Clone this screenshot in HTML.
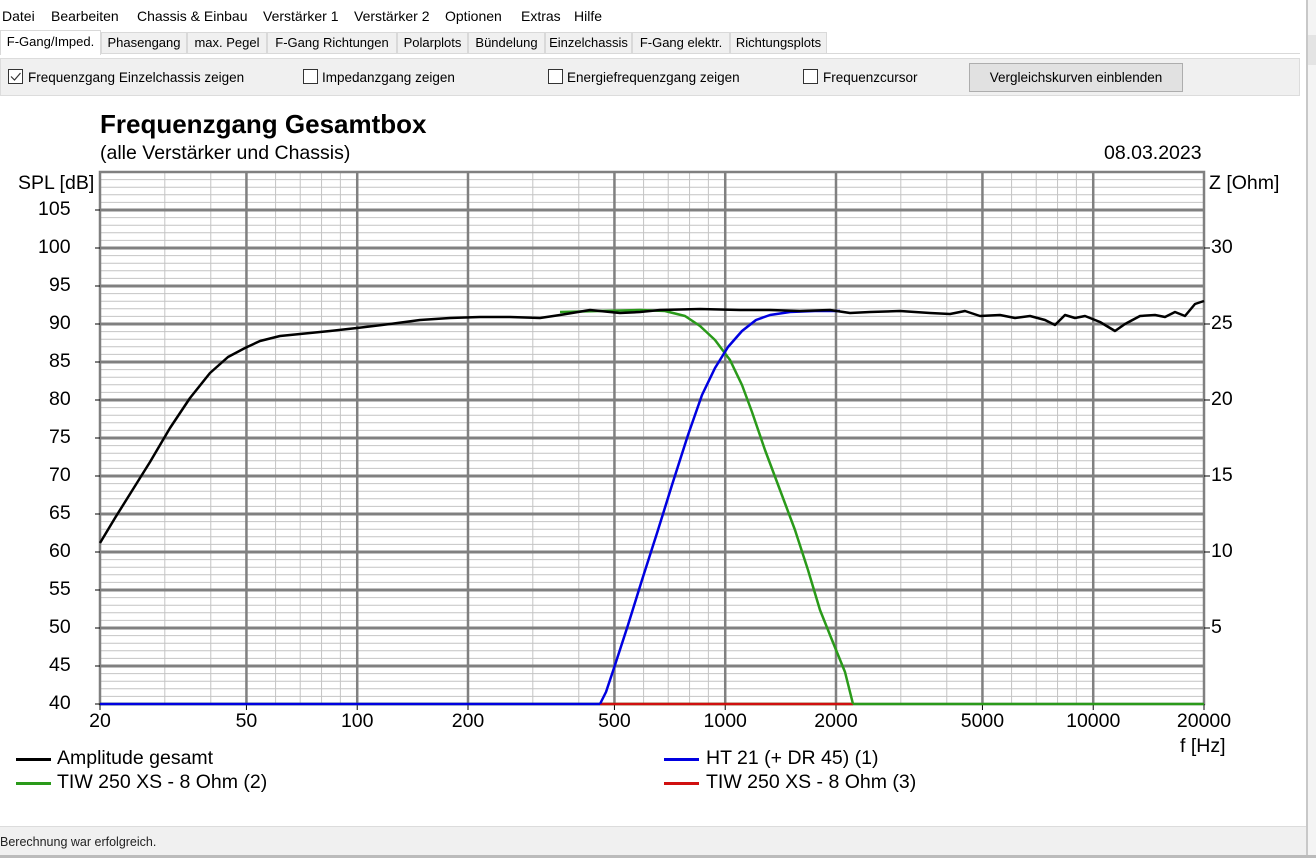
<!DOCTYPE html>
<html><head><meta charset="utf-8">
<style>
*{margin:0;padding:0;box-sizing:border-box}
body{width:1316px;height:858px;overflow:hidden;background:#fff;font-family:"Liberation Sans",sans-serif;position:relative;color:#000}
.a{position:absolute;white-space:nowrap}
.menu{font-size:14px;top:8px}
.tab{position:absolute;top:32px;height:22px;border:1px solid #d9d9d9;background:#f0f0f0;font-size:13px;line-height:20px;text-align:center}
.cb{position:absolute;top:69px;width:15px;height:15px;border:1px solid #333;background:#fff}
.lbl{font-size:13.5px;top:70px}
.ax{font-size:19.5px}
</style></head><body>
<div class="a menu" style="left:2px">Datei</div>
<div class="a menu" style="left:51px">Bearbeiten</div>
<div class="a menu" style="left:137px">Chassis &amp; Einbau</div>
<div class="a menu" style="left:263px">Verstärker 1</div>
<div class="a menu" style="left:354px">Verstärker 2</div>
<div class="a menu" style="left:445px">Optionen</div>
<div class="a menu" style="left:521px">Extras</div>
<div class="a menu" style="left:574px">Hilfe</div>

<div class="a" style="left:0;top:53px;width:1300px;height:1px;background:#d9d9d9"></div>
<div class="tab" style="left:101px;width:86px">Phasengang</div>
<div class="tab" style="left:187px;width:80px">max. Pegel</div>
<div class="tab" style="left:267px;width:130px">F-Gang Richtungen</div>
<div class="tab" style="left:397px;width:71px">Polarplots</div>
<div class="tab" style="left:468px;width:77px">Bündelung</div>
<div class="tab" style="left:545px;width:87px">Einzelchassis</div>
<div class="tab" style="left:632px;width:98px">F-Gang elektr.</div>
<div class="tab" style="left:730px;width:97px">Richtungsplots</div>
<div class="tab" style="left:0;top:30px;width:101px;height:25px;background:#fff;border-bottom:none;line-height:22px">F-Gang/Imped.</div>

<div class="a" style="left:0;top:58px;width:1300px;height:38px;background:#f0f0f0;border:1px solid #dcdcdc"></div>
<div class="cb" style="left:8px"></div>
<svg class="a" style="left:8px;top:69px" width="15" height="15"><path d="M3 7.5 L6.5 11 L12.5 4" fill="none" stroke="#333" stroke-width="1.2"/></svg>
<div class="a lbl" style="left:28px">Frequenzgang Einzelchassis zeigen</div>
<div class="cb" style="left:303px"></div><div class="a lbl" style="left:322px">Impedanzgang zeigen</div>
<div class="cb" style="left:548px"></div><div class="a lbl" style="left:567px">Energiefrequenzgang zeigen</div>
<div class="cb" style="left:803px"></div><div class="a lbl" style="left:823px">Frequenzcursor</div>
<div class="a" style="left:969px;top:63px;width:214px;height:29px;background:#e1e1e1;border:1px solid #adadad;font-size:13.5px;line-height:27px;text-align:center">Vergleichskurven einblenden</div>

<div class="a" style="left:100px;top:109px;font-size:26px;font-weight:bold">Frequenzgang Gesamtbox</div>
<div class="a ax" style="left:100px;top:142px">(alle Verstärker und Chassis)</div>
<div class="a ax" style="left:1104px;top:142px">08.03.2023</div>
<div class="a ax" style="left:18px;top:172px">SPL [dB]</div>
<div class="a ax" style="left:1209px;top:172px">Z [Ohm]</div>

<svg class="a" style="left:0;top:0" width="1316" height="858" id="s"></svg>
<div id="labels"></div>

<div class="a" style="left:16px;top:758px;width:35px;height:3px;background:#000"></div>
<div class="a ax" style="left:57px;top:747px">Amplitude gesamt</div>
<div class="a" style="left:16px;top:782px;width:35px;height:3px;background:#2a9a1a"></div>
<div class="a ax" style="left:57px;top:771px">TIW 250 XS - 8 Ohm (2)</div>
<div class="a" style="left:664px;top:758px;width:35px;height:3px;background:#0000e0"></div>
<div class="a ax" style="left:706px;top:747px">HT 21 (+ DR 45) (1)</div>
<div class="a" style="left:664px;top:782px;width:35px;height:3px;background:#d01010"></div>
<div class="a ax" style="left:706px;top:771px">TIW 250 XS - 8 Ohm (3)</div>
<div class="a ax" style="left:1180px;top:735px">f [Hz]</div>

<div class="a" style="left:0;top:826px;width:1308px;height:32px;background:#f0f0f0;border-top:1px solid #dcdcdc"></div>
<div class="a" style="left:0;top:835px;font-size:12.5px;color:#222">Berechnung war erfolgreich.</div>
<div class="a" style="left:1306px;top:0;width:2px;height:858px;background:#c8c8c8"></div>
<div class="a" style="left:1308px;top:0;width:8px;height:858px;background:#f4f4f4"></div>
<div class="a" style="left:1308px;top:35px;width:8px;height:30px;background:#e4e4e4"></div>
<div class="a" style="left:0;top:855px;width:1316px;height:3px;background:#bbb"></div>

<script>
var s=document.getElementById('s'),h='';
function X(f){return 100+368*Math.log10(f/20);}
function Y(d){return 704-7.6*(d-40);}
for(var d=41;d<110;d++){if(d%5)h+='<line x1="100" x2="1204" y1="'+Y(d)+'" y2="'+Y(d)+'" stroke="#c4c4c4" stroke-width="1"/>';}
var fs=[];[10,100,1000,10000].forEach(function(m){for(var k=1;k<10;k++)fs.push(k*m);});
fs.forEach(function(f){if(f<=20||f>=20000)return;var maj=[50,100,200,500,1000,2000,5000,10000].indexOf(f)>=0;
h+='<line y1="172" y2="704" x1="'+X(f)+'" x2="'+X(f)+'" stroke="'+(maj?'#808080':'#c4c4c4')+'" stroke-width="'+(maj?2.5:1)+'"/>';});
for(var d=45;d<110;d+=5){h+='<line x1="100" x2="1204" y1="'+Y(d)+'" y2="'+Y(d)+'" stroke="#808080" stroke-width="3"/>';}
h+='<rect x="100" y="172" width="1104" height="532" fill="none" stroke="#808080" stroke-width="2.5"/>';
var L='';
for(var d=40;d<=105;d+=5){h+='<line x1="95" x2="100" y1="'+Y(d)+'" y2="'+Y(d)+'" stroke="#000"/>';
L+='<div class="a ax" style="left:'+(d<100?49:38)+'px;top:'+(Y(d)-12)+'px">'+d+'</div>';}
for(var z=5;z<=30;z+=5){var y=704-z*15.2;h+='<line x1="1204" x2="1210" y1="'+y+'" y2="'+y+'" stroke="#000"/>';
L+='<div class="a ax" style="left:1211px;top:'+(y-12)+'px">'+z+'</div>';}
[20,50,100,200,500,1000,2000,5000,10000,20000].forEach(function(f){var x=X(f);h+='<line x1="'+x+'" x2="'+x+'" y1="704" y2="710" stroke="#000"/>';
var w=String(f).length*10.85;L+='<div class="a ax" style="left:'+(x-w/2)+'px;top:710px">'+f+'</div>';});
document.getElementById('labels').innerHTML=L;
function P(pts,c){return '<polyline points="'+pts+'" fill="none" stroke="'+c+'" stroke-width="2.5" stroke-linejoin="round"/>';}
h+=P('100,704 1204,704','#2a9a1a');
h+=P('600,704 853,704','#d01010');
h+=P('100,704 600,704','#0000e0');
h+=P('560,312 600,311 640,310 665,311 685,316 700,326 715,340 730,360 742,385 752,412 765,450 780,490 795,530 808,570 820,610 832,640 845,672 853,704','#2a9a1a');
h+=P('600,704 606,692 615,665 628,625 642,580 658,530 672,485 688,435 702,395 715,368 728,347 742,331 756,320 770,315 790,312 815,311 840,311','#0000e0');
h+=P('100,543 115,518 130,494 150,462 170,428 190,398 210,373 228,357 245,348 260,341 280,336 300,334 330,331 357,328 390,324 420,320 450,318 480,317 510,317 540,318 560,315 590,310 620,313 640,312 660,310 700,309 740,310 770,310 800,311 830,310 850,313 870,312 900,311 930,313 950,314 965,311 980,316 1000,315 1015,318 1030,316 1045,320 1055,325 1065,315 1075,318 1085,316 1100,322 1115,331 1125,324 1140,316 1155,315 1165,317 1175,312 1185,316 1195,304 1204,301','#000');
s.innerHTML=h;
</script>
</body></html>
